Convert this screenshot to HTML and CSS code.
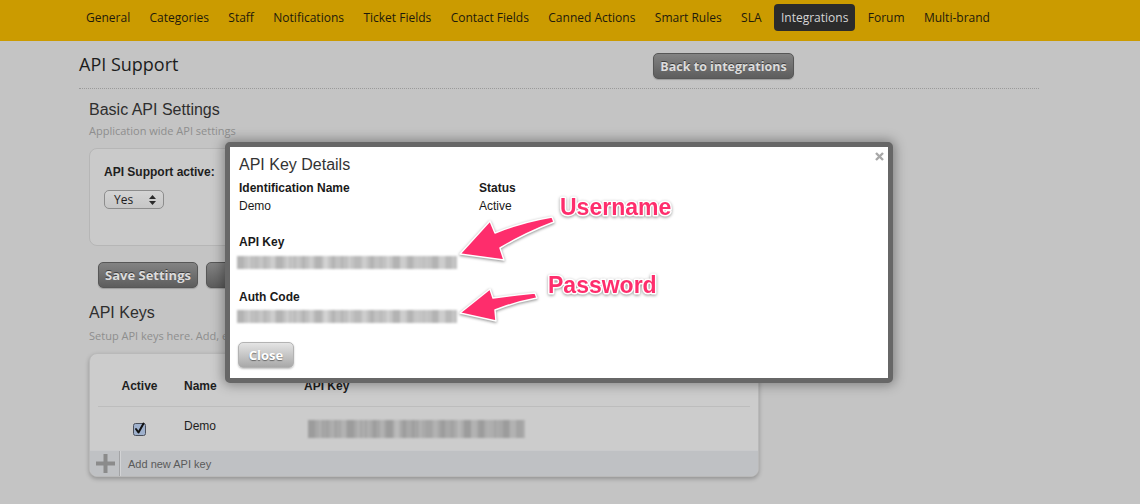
FILE: index.html
```html
<!DOCTYPE html>
<html>
<head>
<meta charset="utf-8">
<title>API Support</title>
<link rel="stylesheet" href="styles.css">
</head>
<body>
<nav class="topnav">
  <a class="nav-item">General</a>
  <a class="nav-item">Categories</a>
  <a class="nav-item">Staff</a>
  <a class="nav-item">Notifications</a>
  <a class="nav-item">Ticket Fields</a>
  <a class="nav-item">Contact Fields</a>
  <a class="nav-item">Canned Actions</a>
  <a class="nav-item">Smart Rules</a>
  <a class="nav-item">SLA</a>
  <a class="nav-item nav-active">Integrations</a>
  <a class="nav-item">Forum</a>
  <a class="nav-item">Multi-brand</a>
</nav>

<main class="page">
  <header class="page-head">
    <h1 class="page-title">API Support</h1>
    <button class="btn-dark back-btn">Back to integrations</button>
  </header>

  <section class="section">
    <h2 class="section-title">Basic API Settings</h2>
    <div class="section-sub">Application wide API settings</div>
    <div class="settings-panel">
      <div class="field-label">API Support active:</div>
      <div class="select">
        <span>Yes</span>
        <svg class="select-arrows" width="7" height="10" viewBox="0 0 7 10"><path d="M3.5 0 L7 4 L0 4 Z M0 6 L7 6 L3.5 10 Z"/></svg>
      </div>
    </div>
    <div class="btn-row">
      <button class="btn-dark">Save Settings</button>
      <button class="btn-dark">Reset</button>
    </div>

    <h2 class="section-title keys-title">API Keys</h2>
    <div class="section-sub keys-sub">Setup API keys here. Add, edit or remove keys.</div>
    <div class="keys-panel">
      <div class="keys-head">
        <div class="col-active">Active</div>
        <div class="col-name">Name</div>
        <div class="col-key">API Key</div>
      </div>
      <div class="keys-row">
        <div class="col-active">
          <svg class="checkbox" width="13" height="14" viewBox="0 0 13 14">
            <rect x="0.5" y="1.5" width="12" height="12" rx="2" class="cb-box"/>
            <path d="M3 7 L5.5 10.5 L10.5 1.5" class="cb-check"/>
          </svg>
        </div>
        <div class="col-name row-name">Demo</div>
        <div class="col-key"><div class="blur blur-row"></div></div>
      </div>
      <div class="keys-foot">
        <svg class="plus" width="19" height="19" viewBox="0 0 19 19"><path d="M7.5 0 H11.5 V7.5 H19 V11.5 H11.5 V19 H7.5 V11.5 H0 V7.5 H7.5 Z"/></svg>
        <span class="foot-divider"></span>
        <span class="foot-text">Add new API key</span>
      </div>
    </div>
  </section>
</main>

<div class="modal">
  <svg class="modal-close" width="9" height="9" viewBox="0 0 9 9"><path d="M1 1 L8 8 M8 1 L1 8"/></svg>
  <h3 class="modal-title">API Key Details</h3>
  <div class="detail-grid">
    <div class="d-label">Identification Name</div>
    <div class="d-label">Status</div>
    <div class="d-value">Demo</div>
    <div class="d-value">Active</div>
  </div>
  <div class="d-label key-label">API Key</div>
  <div class="blur blur-modal blur-key"></div>
  <div class="d-label key-label">Auth Code</div>
  <div class="blur blur-modal blur-auth"></div>
  <button class="btn-light">Close</button>
</div>

<svg class="annot" width="1140" height="504" viewBox="0 0 1140 504">
  <path class="arrow" d="M460,254 L490,221 L495,233 Q522,222 552,217 L554,222 Q525,233 500,248 L504,260 Z"/>
  <path class="arrow" d="M460,313 L490,289 L493,298 Q514,295 535,293 L537,298 Q515,302 495,310 L496,321 Z"/>
  <text class="annot-text" x="560" y="215">Username</text>
  <text class="annot-text" x="548" y="293">Password</text>
</svg>
</body>
</html>
```

FILE: styles.css
```css
* { box-sizing: border-box; }

html, body {
  margin: 0;
  padding: 0;
  width: 1140px;
  height: 504px;
  overflow: hidden;
  background: #c4c4c4;
  font-family: "Liberation Sans", Arial, sans-serif;
  color: #2a2a2a;
}

/* top navigation */
.topnav {
  display: flex;
  align-items: flex-start;
  gap: 5.4px;
  height: 41px;
  padding-left: 79px;
  background: #cb9b00;
}
.nav-item {
  margin-top: 4px;
  height: 27px;
  line-height: 27px;
  padding: 0 7px;
  border-radius: 4px;
  font: 12px/27px "Open Sans", sans-serif;
  color: #1e1a0c;
  white-space: nowrap;
}
.nav-active {
  background: #2b2b2b;
  color: #d6d6d6;
}

/* page */
.page {
  width: 1039px;
  padding-left: 79px;
}
.page-head {
  display: flex;
  align-items: flex-start;
  height: 48px;
  padding-top: 8px;
  border-bottom: 1px dotted #9a9a9a;
}
.page-title {
  width: 574px;
  margin: 0;
  font: 18px/30px "Open Sans", sans-serif;
  color: #1c1c1c;
}

.btn-dark {
  height: 26px;
  padding: 0 10px;
  border: 1px solid #575757;
  border-radius: 5px;
  background: linear-gradient(#838383, #5d5d5d);
  box-shadow: 0 1px 1px rgba(0,0,0,0.2);
  font: bold 12.5px "Open Sans", sans-serif;
  color: #dcdcdc;
  text-shadow: 0 -1px 0 #3c3c3c;
}
.back-btn {
  margin-top: 4px;
  width: 141px;
  padding: 0;
}

.section {
  padding-left: 10px;
}
.section-title {
  margin: 11px 0 0;
  font: 16px/20px "Liberation Sans", Arial, sans-serif;
  font-weight: normal;
  color: #2e2e2e;
}
.section-sub {
  margin-top: 3px;
  font: 11px/16px "Open Sans", sans-serif;
  color: #8e8e8e;
}

.settings-panel {
  width: 670px;
  height: 98px;
  margin-top: 9px;
  padding: 15px 14px 0 14px;
  border: 1px solid #b6b6b6;
  border-radius: 8px;
  background: #cacaca;
}
.field-label {
  font: bold 12px/16px "Liberation Sans", Arial, sans-serif;
  color: #1e1e1e;
}
.select {
  display: flex;
  align-items: center;
  justify-content: space-between;
  width: 60px;
  height: 19px;
  margin-top: 10px;
  padding: 0 7px 0 9px;
  border: 1px solid #8d8d8d;
  border-radius: 5px;
  background: linear-gradient(#d4d4d4, #c6c6c6);
  font: 12px/17px "Open Sans", sans-serif;
  color: #1e1e1e;
}
.select-arrows { fill: #2a2a2a; }

.btn-row {
  display: flex;
  gap: 8px;
  margin: 16px 0 0 9px;
}
.btn-row .btn-dark {
  width: 100px;
  font-size: 13px;
  padding: 0;
}

.keys-title { margin-top: 15px; }
.keys-sub { margin-top: 5px; }

.keys-panel {
  width: 670px;
  margin-top: 9px;
  border: 1px solid #b9b9b9;
  border-radius: 8px;
  background: #cccccc;
  box-shadow: 0 2px 4px rgba(0,0,0,0.25);
  overflow: hidden;
}
.keys-head, .keys-row {
  display: grid;
  grid-template-columns: 83px 120px 1fr;
  margin: 0 8px;
}
.keys-head {
  padding: 22px 0 10px;
  border-bottom: 1px solid #bdbdbd;
  font: bold 12px/20px "Liberation Sans", Arial, sans-serif;
  color: #1e1e1e;
}
.keys-row {
  height: 43px;
  align-items: center;
  font: 12px/16px "Liberation Sans", Arial, sans-serif;
  color: #1e1e1e;
}
.col-active { text-align: center; }
.col-name, .col-key { padding-left: 3px; }
.row-name { margin-top: -5px; }
.checkbox { display: block; margin: 0 auto; }
.cb-box { fill: #9eb0cc; stroke: #4a4f5a; stroke-width: 1; }
.cb-check { fill: none; stroke: #111; stroke-width: 2; stroke-linecap: round; stroke-linejoin: round; }

.keys-foot {
  display: flex;
  align-items: center;
  height: 26px;
  background: #bfc1c4;
  border-top: 1px solid #c9cacc;
}
.plus {
  margin-left: 6px;
  fill: #8b8b8b;
}
.foot-divider {
  align-self: stretch;
  width: 2px;
  margin-left: 4px;
  border-left: 1px solid #a3a4a6;
  border-right: 1px solid #d2d3d5;
}
.foot-text {
  margin-left: 7px;
  font: 11px/16px "Liberation Sans", Arial, sans-serif;
  color: #5a5a5a;
}

/* blurred key strips */
.blur {
  filter: blur(1.1px);
  background:
    repeating-linear-gradient(90deg, rgba(0,0,0,0.07) 0 7px, transparent 7px 13px),
    repeating-linear-gradient(90deg, rgba(0,0,0,0.06) 0 11px, transparent 11px 19px),
    repeating-linear-gradient(90deg, transparent 0 23px, rgba(255,255,255,0.12) 23px 31px),
    #c3c3c3;
}
.blur-row {
  width: 217px;
  height: 18px;
  margin-left: 4px;
  background-color: #b2b2b2;
}
.blur-modal {
  width: 220px;
  height: 13px;
  margin-left: -2px;
  background-color: #cdcdcd;
}
.blur-key { margin-top: 6px; }
.blur-auth { margin-top: 5px; }

/* modal */
.modal {
  position: absolute;
  left: 225px;
  top: 142px;
  width: 668px;
  height: 241px;
  padding: 8px 9px 10px;
  border: 5px solid #676767;
  border-radius: 5px;
  background: #fff;
  box-shadow: 0 0 12px 2px rgba(0,0,0,0.35);
}
.modal-close {
  position: absolute;
  right: 4px;
  top: 5px;
  stroke: #a8a8a8;
  stroke-width: 2.4;
}
.modal-title {
  margin: 0;
  font: 16px/20px "Liberation Sans", Arial, sans-serif;
  font-weight: normal;
  color: #333;
}
.detail-grid {
  display: grid;
  grid-template-columns: 240px 1fr;
  margin-top: 5px;
}
.d-label {
  font: bold 12px/16px "Liberation Sans", Arial, sans-serif;
  color: #1a1a1a;
}
.d-value {
  margin-top: 2px;
  font: 12px/16px "Liberation Sans", Arial, sans-serif;
  color: #1a1a1a;
}
.key-label { margin-top: 20px; }

.btn-light {
  display: block;
  width: 56px;
  height: 26px;
  margin: 19px 0 0 -1px;
  padding: 0;
  border: 1px solid #b3b3b3;
  border-radius: 5px;
  background: linear-gradient(#e4e4e4, #a8a8a8);
  box-shadow: 0 1px 2px rgba(0,0,0,0.25);
  font: bold 13px "Open Sans", sans-serif;
  color: #fff;
  text-shadow: 0 1px 1px rgba(0,0,0,0.45);
}

/* annotations */
.annot {
  position: absolute;
  left: 0;
  top: 0;
  pointer-events: none;
}
.arrow {
  fill: #fe2d6c;
  stroke: #fff;
  stroke-width: 1.5;
  stroke-linejoin: round;
  filter: drop-shadow(0 1px 1.5px rgba(0,0,0,0.45));
}
.annot-text {
  font: bold 23px "Liberation Sans", Arial, sans-serif;
  fill: #fe2d6c;
  stroke: #fff;
  stroke-width: 3;
  stroke-linejoin: round;
  paint-order: stroke;
  filter: drop-shadow(0 1px 1.5px rgba(0,0,0,0.4));
}
```
